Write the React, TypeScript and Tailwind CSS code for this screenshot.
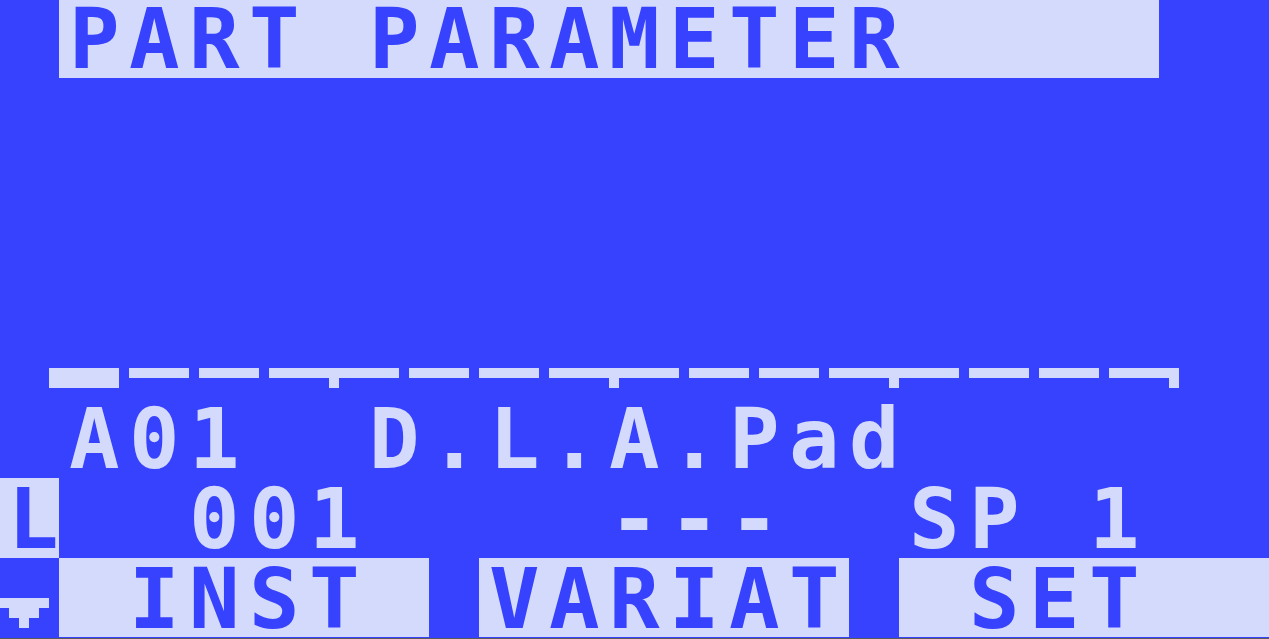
import React from 'react';

// LCD cell grid: 60px per character, 80px per text row, pixels are 10px
const TICKS = [329, 609, 889, 1169];

const LcdText: React.FC<{ text: string; className?: string }> = ({ text, className = '' }) => (
  <span className={`whitespace-pre text-[84px] font-bold tracking-[9.43px] ${className}`}>{text}</span>
);

const Ruler: React.FC = () => {
  const dashes = Array.from({ length: 15 }, (_, i) => 59 + 70 * (i + 1));
  return (
    <svg width="1269" height="20" className="block shrink-0" aria-hidden="true">
      <rect x="49" y="0" width="70" height="20" fill="#d3dafc" />
      {dashes.map((x) => (
        <rect key={x} x={x} y="0" width="60" height="10" fill="#d3dafc" />
      ))}
      {TICKS.map((x) => (
        <rect key={x} x={x} y="0" width="10" height="20" fill="#d3dafc" />
      ))}
    </svg>
  );
};

const DownArrow: React.FC = () => (
  <svg width="59" height="80" className="block shrink-0" aria-hidden="true">
    <rect x="0" y="40" width="49" height="10" fill="#d3dafc" />
    <rect x="9" y="50" width="30" height="10" fill="#d3dafc" />
    <rect x="19" y="60" width="10" height="10" fill="#d3dafc" />
  </svg>
);

const SoftKey: React.FC<{ label: string }> = ({ label }) => (
  <div className="w-[370px] h-[79px] shrink-0 bg-[#d3dafc] text-[#3742fe] pl-[10px] pt-[3px]">
    <LcdText text={label} className="block leading-[76px]" />
  </div>
);

export default function App() {
  return (
    <div className="w-[1269px] h-[639px] overflow-hidden bg-[#3742fe] flex flex-col font-['DejaVu_Sans_Mono',monospace]">
      {/* header */}
      <div className="ml-[59px] w-[1100px] h-[78px] shrink-0 bg-[#d3dafc] text-[#3742fe] pl-[10px]">
        <LcdText text="PART PARAMETER" className="block leading-[78px]" />
      </div>

      <div className="h-[290px] shrink-0" />
      <Ruler />
      <div className="h-[10px] shrink-0" />

      {/* part name row */}
      <div className="h-[80px] shrink-0 pl-[69px] pt-[2px] text-[#d3dafc]">
        <LcdText text="A01  D.L.A.Pad" className="block leading-[78px]" />
      </div>

      {/* value row */}
      <div className="h-[80px] shrink-0 flex text-[#d3dafc]">
        <div className="w-[59px] h-[80px] shrink-0 bg-[#d3dafc] text-[#3742fe] pl-[8px] pt-[2px]">
          <span className="block text-[84px] font-bold leading-[78px]">L</span>
        </div>
        <div className="pl-[10px] pt-[2px]">
          <LcdText text="  001    ---  SP 1" className="block leading-[78px]" />
        </div>
      </div>

      {/* soft keys */}
      <div className="h-[80px] shrink-0 flex">
        <DownArrow />
        <SoftKey label=" INST" />
        <div className="w-[50px] shrink-0" />
        <SoftKey label="VARIAT" />
        <div className="w-[50px] shrink-0" />
        <SoftKey label=" SET" />
      </div>
      <div className="h-[1px] shrink-0 bg-[#5a5a5a]" />
    </div>
  );
}
